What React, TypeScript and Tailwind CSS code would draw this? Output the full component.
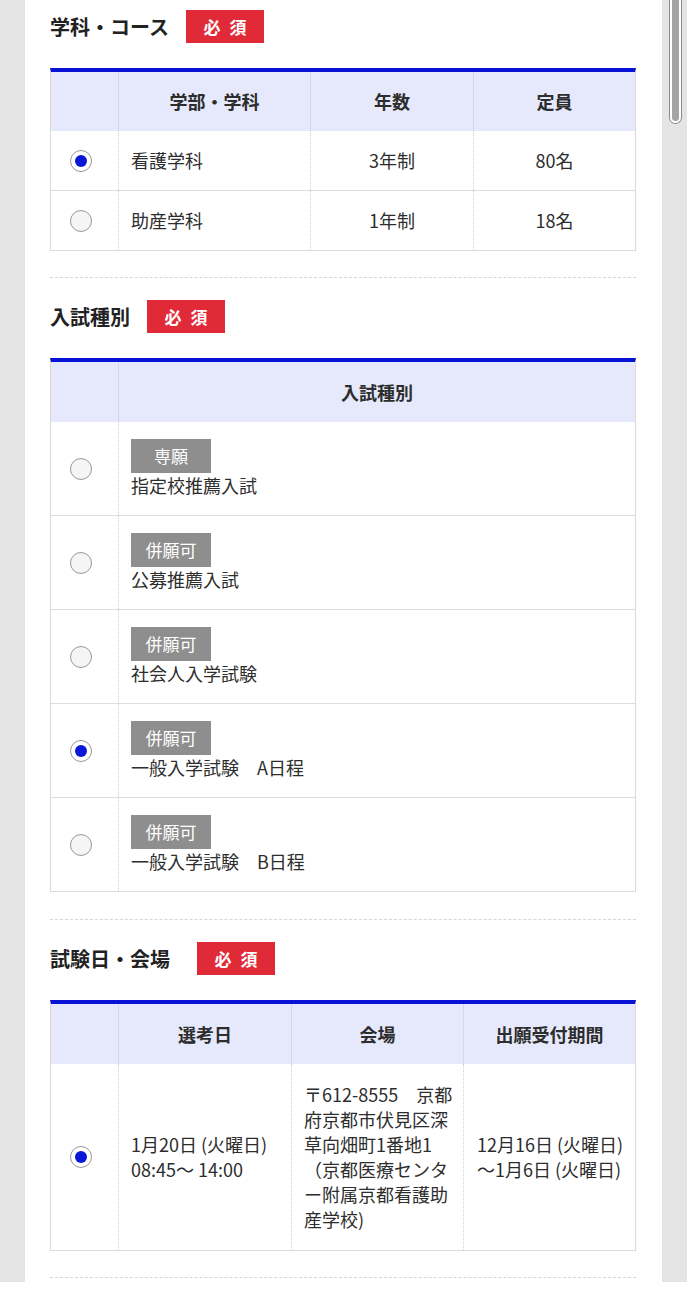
import React from 'react';

const font = { fontFamily: '"Noto Sans CJK JP", "Noto Sans", sans-serif' };

const Radio: React.FC<{ checked?: boolean }> = ({ checked }) => (
    <span
        className={`w-[22px] h-[22px] rounded-full border-[1.5px] border-[#999] flex items-center justify-center flex-shrink-0 ${checked ? 'bg-white' : 'bg-[#f5f5f5]'}`}
    >
        {checked && <span className="w-[12px] h-[12px] rounded-full bg-[#0a17d6]"></span>}
    </span>
);

const Required: React.FC<{ className?: string }> = ({ className = '' }) => (
    <span className={`w-[78px] h-[33px] bg-[#e12a37] text-white text-[17px] font-bold flex items-center justify-center gap-[9px] ${className}`}>
        <span>必</span>
        <span>須</span>
    </span>
);

const SectionTitle: React.FC<{ title: string; gap: string }> = ({ title, gap }) => (
    <div className="flex items-center h-[33px]">
        <h3 className="text-[20px] font-bold text-[#222] leading-none">{title}</h3>
        <Required className={gap} />
    </div>
);

const Tag: React.FC<{ label: string }> = ({ label }) => (
    <span className="w-[80px] h-[34px] bg-[#8e8e8e] text-white text-[17px] flex items-center justify-center">{label}</span>
);

const Separator = () => <div className="border-t border-dashed border-[#d6d6d6]"></div>;

const headCell = "flex items-center justify-center border-l border-[#d4d7ea] font-bold";
const bodyCell = "flex items-center border-l border-dotted border-[#cfcfcf]";

const courses = [
    { name: '看護学科', years: '3年制', cap: '80名', checked: true },
    { name: '助産学科', years: '1年制', cap: '18名', checked: false },
];

const exams = [
    { tag: '専願', name: '指定校推薦入試', checked: false },
    { tag: '併願可', name: '公募推薦入試', checked: false },
    { tag: '併願可', name: '社会人入学試験', checked: false },
    { tag: '併願可', name: '一般入学試験　A日程', checked: true },
    { tag: '併願可', name: '一般入学試験　B日程', checked: false },
];

const address = ['〒612-8555　京都', '府京都市伏見区深', '草向畑町1番地1', '（京都医療センタ', 'ー附属京都看護助', '産学校)'];

const Table: React.FC<{ children: React.ReactNode }> = ({ children }) => (
    <div className="border-t-4 border-t-[#0712d4] border-x border-x-[#d9d9d9] text-[18px] text-[#2d2d2d]">{children}</div>
);

export default function App() {
    return (
        <div className="w-full h-[1291px] bg-white" style={font}>
            <div className="flex w-[687px] h-[1282px]">
                <div className="w-[25px] bg-[#e4e4e4]"></div>
                <main className="flex-1 bg-white pl-[25px] pr-[26px] pt-[10px]">
                    <SectionTitle title="学科・コース" gap="ml-[17px]" />
                    <div className="mt-[25px]">
                        <Table>
                            <div className="grid grid-cols-[67px_192px_163px_1fr] h-[59px] bg-[#e6e9fb]">
                                <div></div>
                                <div className={headCell}>学部・学科</div>
                                <div className={headCell}>年数</div>
                                <div className={headCell}>定員</div>
                            </div>
                            {courses.map(c => (
                                <div key={c.name} className="grid grid-cols-[67px_192px_163px_1fr] h-[60px] border-b border-[#dddddd]">
                                    <div className="flex items-center pl-[19px]"><Radio checked={c.checked} /></div>
                                    <div className={`${bodyCell} pl-[12px]`}>{c.name}</div>
                                    <div className={`${bodyCell} justify-center`}>{c.years}</div>
                                    <div className={`${bodyCell} justify-center`}>{c.cap}</div>
                                </div>
                            ))}
                        </Table>
                    </div>

                    <div className="mt-[26px]"><Separator /></div>
                    <div className="pt-[22px]">
                        <SectionTitle title="入試種別" gap="ml-[17px]" />
                    </div>
                    <div className="mt-[25px]">
                        <Table>
                            <div className="grid grid-cols-[67px_1fr] h-[60px] bg-[#e6e9fb]">
                                <div></div>
                                <div className={headCell}>入試種別</div>
                            </div>
                            {exams.map((e, i) => (
                                <div key={i} className="grid grid-cols-[67px_1fr] h-[94px] border-b border-[#dddddd]">
                                    <div className="flex items-center pl-[19px]"><Radio checked={e.checked} /></div>
                                    <div className="flex flex-col justify-center items-start border-l border-dotted border-[#cfcfcf] pl-[12px]">
                                        <Tag label={e.tag} />
                                        <span className="leading-[25px] whitespace-pre">{e.name}</span>
                                    </div>
                                </div>
                            ))}
                        </Table>
                    </div>

                    <div className="mt-[27px]"><Separator /></div>
                    <div className="pt-[22px]">
                        <SectionTitle title="試験日・会場" gap="ml-[27px]" />
                    </div>
                    <div className="mt-[25px]">
                        <Table>
                            <div className="grid grid-cols-[67px_173px_172px_1fr] h-[60px] bg-[#e6e9fb]">
                                <div></div>
                                <div className={headCell}>選考日</div>
                                <div className={headCell}>会場</div>
                                <div className={headCell}>出願受付期間</div>
                            </div>
                            <div className="grid grid-cols-[67px_173px_172px_1fr] h-[187px] border-b border-[#dddddd] leading-[25px]">
                                <div className="flex items-center pl-[19px]"><Radio checked /></div>
                                <div className={`${bodyCell} pl-[12px]`}>
                                    <div>
                                        <div>1月20日 (火曜日)</div>
                                        <div>08:45〜 14:00</div>
                                    </div>
                                </div>
                                <div className={`${bodyCell} pl-[12px]`}>
                                    <div>
                                        {address.map(l => (
                                            <div key={l} className="whitespace-nowrap">{l}</div>
                                        ))}
                                    </div>
                                </div>
                                <div className={`${bodyCell} pl-[13px]`}>
                                    <div>
                                        <div className="whitespace-nowrap">12月16日 (火曜日)</div>
                                        <div className="whitespace-nowrap">〜1月6日 (火曜日)</div>
                                    </div>
                                </div>
                            </div>
                        </Table>
                    </div>
                    <div className="mt-[26px]"><Separator /></div>
                </main>
                <div className="w-[25px] bg-[#e4e4e4] relative">
                    <div className="absolute left-[7px] top-0 w-[13px] h-[124px] border-[1.5px] border-t-0 border-[#8a8a8a] bg-white rounded-b-full p-[2px] pt-0">
                        <div className="w-full h-full bg-[#a5a5a5] rounded-b-full"></div>
                    </div>
                </div>
            </div>
        </div>
    );
}
